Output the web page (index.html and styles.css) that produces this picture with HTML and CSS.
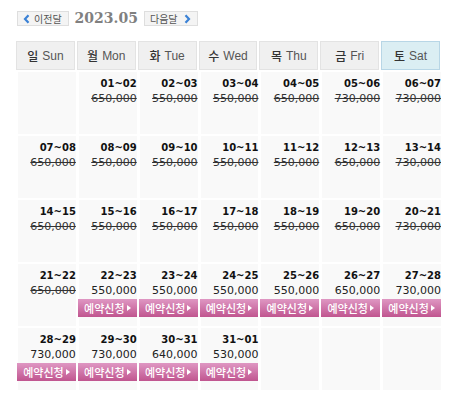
FILE: index.html
```html
<!DOCTYPE html>
<html lang="ko">
<head>
<meta charset="utf-8">
<link rel="stylesheet" href="styles.css">
</head>
<body>
<div class="wrap">
  <div class="nav">
    <span class="navbtn"><svg class="chev" width="7" height="10" viewBox="0 0 7 10"><path d="M5.5 1.2 L2 5 L5.5 8.8" fill="none" stroke="#3b82d6" stroke-width="2.2"/></svg>이전달</span>
    <span class="month">2023.05</span>
    <span class="navbtn">다음달<svg class="chev r" width="7" height="10" viewBox="0 0 7 10"><path d="M1.5 1.2 L5 5 L1.5 8.8" fill="none" stroke="#3b82d6" stroke-width="2.2"/></svg></span>
  </div>
  <div class="cal">
    <div class="hd"><b>일</b> Sun</div>
    <div class="hd"><b>월</b> Mon</div>
    <div class="hd"><b>화</b> Tue</div>
    <div class="hd"><b>수</b> Wed</div>
    <div class="hd"><b>목</b> Thu</div>
    <div class="hd"><b>금</b> Fri</div>
    <div class="hd sat"><b>토</b> Sat</div>

    <div class="cell"></div>
    <div class="cell"><div class="d">01~02</div><div class="p s">650,000</div></div>
    <div class="cell"><div class="d">02~03</div><div class="p s">550,000</div></div>
    <div class="cell"><div class="d">03~04</div><div class="p s">550,000</div></div>
    <div class="cell"><div class="d">04~05</div><div class="p s">650,000</div></div>
    <div class="cell"><div class="d">05~06</div><div class="p s">730,000</div></div>
    <div class="cell"><div class="d">06~07</div><div class="p s">730,000</div></div>

    <div class="cell"><div class="d">07~08</div><div class="p s">650,000</div></div>
    <div class="cell"><div class="d">08~09</div><div class="p s">550,000</div></div>
    <div class="cell"><div class="d">09~10</div><div class="p s">550,000</div></div>
    <div class="cell"><div class="d">10~11</div><div class="p s">550,000</div></div>
    <div class="cell"><div class="d">11~12</div><div class="p s">550,000</div></div>
    <div class="cell"><div class="d">12~13</div><div class="p s">650,000</div></div>
    <div class="cell"><div class="d">13~14</div><div class="p s">730,000</div></div>

    <div class="cell"><div class="d">14~15</div><div class="p s">650,000</div></div>
    <div class="cell"><div class="d">15~16</div><div class="p s">550,000</div></div>
    <div class="cell"><div class="d">16~17</div><div class="p s">550,000</div></div>
    <div class="cell"><div class="d">17~18</div><div class="p s">550,000</div></div>
    <div class="cell"><div class="d">18~19</div><div class="p s">550,000</div></div>
    <div class="cell"><div class="d">19~20</div><div class="p s">650,000</div></div>
    <div class="cell"><div class="d">20~21</div><div class="p s">730,000</div></div>

    <div class="cell"><div class="d">21~22</div><div class="p s">650,000</div></div>
    <div class="cell"><div class="d">22~23</div><div class="p">550,000</div><span class="btn">예약신청<i class="tri"></i></span></div>
    <div class="cell"><div class="d">23~24</div><div class="p">550,000</div><span class="btn">예약신청<i class="tri"></i></span></div>
    <div class="cell"><div class="d">24~25</div><div class="p">550,000</div><span class="btn">예약신청<i class="tri"></i></span></div>
    <div class="cell"><div class="d">25~26</div><div class="p">550,000</div><span class="btn">예약신청<i class="tri"></i></span></div>
    <div class="cell"><div class="d">26~27</div><div class="p">650,000</div><span class="btn">예약신청<i class="tri"></i></span></div>
    <div class="cell"><div class="d">27~28</div><div class="p">730,000</div><span class="btn">예약신청<i class="tri"></i></span></div>

    <div class="cell"><div class="d">28~29</div><div class="p">730,000</div><span class="btn">예약신청<i class="tri"></i></span></div>
    <div class="cell"><div class="d">29~30</div><div class="p">730,000</div><span class="btn">예약신청<i class="tri"></i></span></div>
    <div class="cell"><div class="d">30~31</div><div class="p">640,000</div><span class="btn">예약신청<i class="tri"></i></span></div>
    <div class="cell"><div class="d">31~01</div><div class="p">530,000</div><span class="btn">예약신청<i class="tri"></i></span></div>
    <div class="cell"></div>
    <div class="cell"></div>
    <div class="cell"></div>
  </div>
</div>
</body>
</html>
```
FILE: styles.css
```css
html, body {
  margin: 0;
  padding: 0;
  background: #fff;
}
.wrap {
  padding: 11px 0 0 16px;
  font-family: "Liberation Sans", Arial, "Noto Sans CJK KR", sans-serif;
}
.nav {
  display: flex;
  align-items: center;
  height: 15px;
  margin-left: 1px;
}
.navbtn {
  display: inline-flex;
  align-items: center;
  height: 13px;
  padding: 0 6px 0 5px;
  border: 1px solid #dedede;
  background: #f4f4f4;
  font-family: "Noto Sans CJK KR", sans-serif;
  font-size: 10px;
  color: #555;
  line-height: 13px;
}
.chev { margin-right: 4px; }
.chev.r { margin: 0 0 0 6px; }
.month {
  font-family: "DejaVu Serif", serif;
  font-weight: bold;
  font-size: 14px;
  color: #808080;
  margin: 0 6px 0 6px;
  line-height: 15px;
}
.cal {
  margin-top: 15px;
  width: 424px;
  display: grid;
  grid-template-columns: repeat(7, 1fr);
  grid-template-rows: 29px repeat(5, 62px);
  gap: 2px;
}
.hd {
  box-sizing: border-box;
  border: 1px solid #e3e3e3;
  background: #f0f0f0;
  color: #555;
  font-size: 12px;
  display: flex;
  align-items: center;
  justify-content: center;
}
.hd b {
  font-family: "Noto Sans CJK KR", sans-serif;
  font-weight: 500;
  color: #333;
  margin-right: 4px;
  font-size: 12px;
}
.hd.sat {
  background: #dbeef3;
  border-color: #b8d6e6;
}
.cell {
  background: #f9f9f9;
  padding: 4px 0 0 0;
  margin-left: 2px;
  margin-right: -1px;
  text-align: right;
  font-family: "DejaVu Sans", Verdana, sans-serif;
}
.d {
  font-weight: bold;
  font-size: 10px;
  line-height: 15px;
  color: #111;
}
.p {
  font-size: 11px;
  line-height: 15px;
  color: #222;
}
.p.s {
  text-decoration: line-through;
  color: #333;
}
.btn {
  display: flex;
  align-items: center;
  justify-content: center;
  margin-top: 1px;
  margin-left: -1px;
  height: 18px;
  background: linear-gradient(#df97c3, #c0558f);
  color: #fff;
  font-family: "Noto Sans CJK KR", sans-serif;
  font-size: 11px;
  font-weight: 500;
  line-height: 18px;
}
.tri {
  display: inline-block;
  width: 0;
  height: 0;
  border-left: 4px solid #fff;
  border-top: 3.5px solid transparent;
  border-bottom: 3.5px solid transparent;
  margin-left: 2px;
}
```
